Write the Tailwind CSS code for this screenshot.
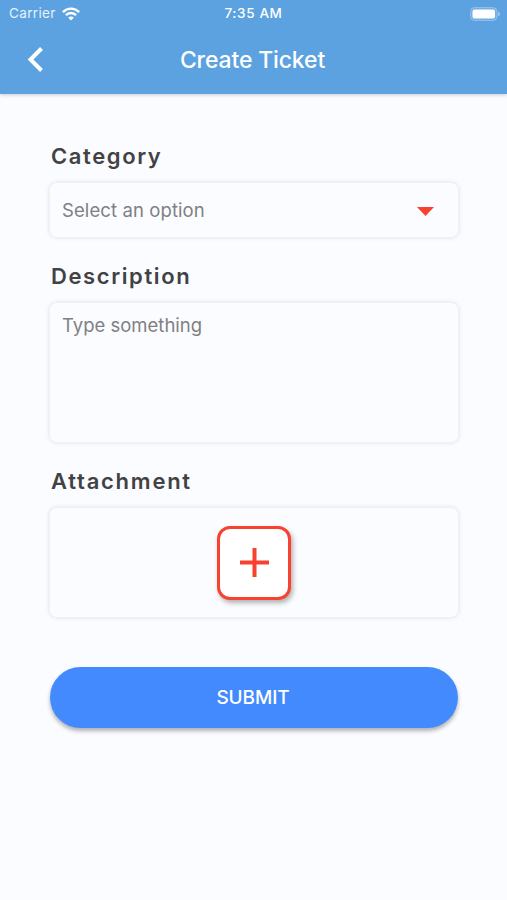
<!DOCTYPE html>
<html lang="en">
<head>
<meta charset="utf-8">
<title>Create Ticket</title>
<script src="https://cdn.jsdelivr.net/npm/@tailwindcss/browser@4"></script>
</head>
<body class="h-[900px] w-[507px] overflow-hidden bg-[#fbfcff] font-['Inter','Liberation_Sans',sans-serif]">
<header class="h-[94px] bg-[#5ca2e0] text-white shadow-[0_1px_4px_rgba(0,0,0,0.2)]">
  <div class="grid h-[27px] grid-cols-[1fr_auto_1fr] items-center pr-[7px] pl-[9px] text-[13.5px] leading-none">
    <div class="flex items-center gap-[6px]">
      <span class="tracking-[0.35px] text-white/85">Carrier</span>
      <svg class="h-[14px] w-[18px]" viewBox="0 0 18 14" fill="none" stroke="white" stroke-width="2.4"><path d="M.9 5.1C5.400.5 12.600.5 17.100 5.100M3.900 8.100c2.900-2.900 7.300-2.900 10.200 0"/><path d="M9 13.500 6.200 10.700c1.600-1.500 4-1.500 5.600 0z" fill="white" stroke="none"/></svg>
    </div>
    <span class="-translate-x-px pt-px text-center font-medium tracking-[0.65px]">7:35 AM</span>
    <svg class="h-[14px] w-[30px] justify-self-end" viewBox="0 0 30 14"><rect x=".5" y=".5" width="26.500" height="13" rx="4" fill="white" fill-opacity=".15" stroke="white" stroke-opacity=".25"/><rect x="2.500" y="2.500" width="22.500" height="9" rx="2" fill="white"/><path d="M28 4.500c2.500 1 2.500 4 0 5z" fill="white" fill-opacity=".4"/></svg>
  </div>
  <div class="grid h-[67px] grid-cols-[1fr_auto_1fr] items-center">
    <svg class="mb-[3px] ml-[27px] h-[26px] w-[17px]" viewBox="0 0 17 26" fill="none" stroke="white" stroke-width="4"><path d="M14.500 2.500 3.500 13.500l11 11"/></svg>
    <h1 class="-translate-x-px text-[23px] leading-none font-medium tracking-[-0.15px]">Create Ticket</h1>
  </div>
</header>
<main class="flex flex-col px-12 pt-[50px] text-[#424244]">
  <h2 class="pl-[3px] text-[22px] leading-[24px] font-semibold tracking-[1.6px]">Category</h2>
  <div class="mt-[13px] flex h-[58px] w-[412px] items-center justify-between rounded-[9px] border-2 border-[#f0f1f3] pr-[24px] pl-[12px] shadow-[0_0_4px_rgba(0,0,0,0.06)]">
    <span class="pt-[2px] text-[18.500px] tracking-[0.1px] text-[#808083]">Select an option</span>
    <svg class="mt-[2px] h-[9px] w-[17px]" viewBox="0 0 17 9"><path d="M0 0h17L8.500 9z" fill="#f9412f"/></svg>
  </div>
  <h2 class="mt-[25px] pl-[3px] text-[22px] leading-[24px] font-semibold tracking-[1.6px]">Description</h2>
  <div class="mt-[13px] h-[143px] w-[412px] rounded-[9px] border-2 border-[#f0f1f3] px-[12px] pt-[10px] text-[18.500px] leading-[24px] text-[#808083] shadow-[0_0_4px_rgba(0,0,0,0.06)]"><span>Type something</span></div>
  <h2 class="mt-[25px] pl-[3px] text-[22px] leading-[24px] font-semibold tracking-[1.75px]">Attachment</h2>
  <div class="mt-[13px] flex h-[113px] w-[412px] items-center justify-center rounded-[9px] border-2 border-[#f0f1f3] shadow-[0_0_4px_rgba(0,0,0,0.06)]">
    <button class="flex size-[74px] items-center justify-center rounded-[13px] border-[3px] border-[#f9412f] bg-white shadow-[2px_3px_5px_rgba(0,0,0,0.3)]" aria-label="Add attachment">
      <svg class="size-[29px]" viewBox="0 0 29 29" fill="none" stroke="#f9412f" stroke-width="4"><path d="M14.500 0v29M0 14.500h29"/></svg>
    </button>
  </div>
  <button class="mt-[48px] ml-[2px] h-[61px] w-[408px] rounded-full bg-[#448aff] pt-[2px] pr-[2px] text-[19px] font-medium tracking-[-0.1px] text-white shadow-[0_3px_4px_rgba(0,0,0,0.3)]">SUBMIT</button>
</main>
</body>
</html>
